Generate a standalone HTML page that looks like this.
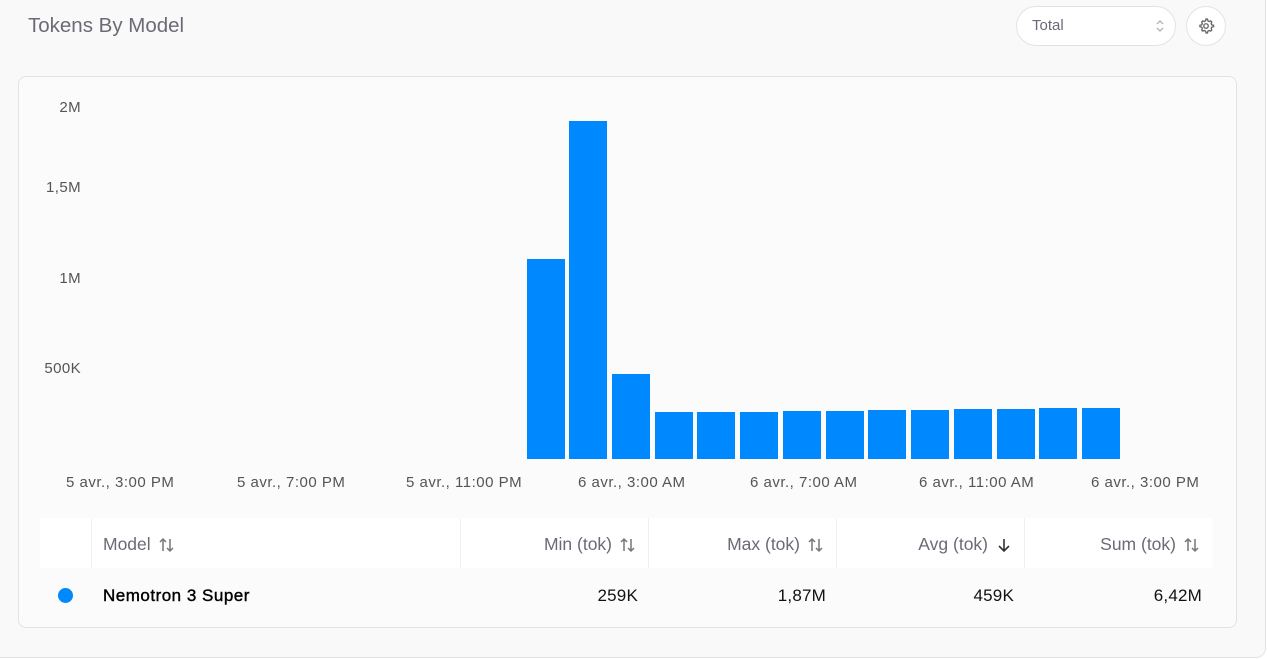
<!DOCTYPE html>
<html><head><meta charset="utf-8"><style>
*{box-sizing:border-box;margin:0;padding:0}
body{width:1267px;height:659px;background:#fff;font-family:"Liberation Sans",sans-serif;position:relative;overflow:hidden}
.outer{position:absolute;left:-10px;top:-10px;width:1276px;height:668px;background:#f9f9f9;border:1px solid #e3e3e3;border-radius:10px}
.t{position:absolute;font-size:15px;color:#555;white-space:nowrap}
.y{font-size:15px;letter-spacing:0.4px}
.x{font-size:15px;letter-spacing:0.5px;top:474px}
.h{font-size:17.5px;color:#6b6b78;top:534px;display:flex;align-items:center;gap:7px}
.v{font-size:17px;color:#111;top:586px;letter-spacing:0.2px}
.bar{position:absolute;background:#0088ff;bottom:200px;width:38px}
</style></head><body>
<div class="outer"></div>
<div class="t" style="left:28px;top:14px;font-size:20.5px;color:#6b6b78">Tokens By Model</div>
<div style="position:absolute;left:1016px;top:6px;width:160px;height:40px;border:1px solid #e3e3e3;border-radius:20px;background:#fff"></div>
<div class="t" style="left:1032px;top:17px;font-size:15px;color:#6b6b78">Total</div>
<svg style="position:absolute;left:1154px;top:17px" width="12" height="18" viewBox="0 0 12 18"><path d="M3 7l3-3 3 3M3 11l3 3 3-3" fill="none" stroke="#aaa" stroke-width="1.2"/></svg>
<div style="position:absolute;left:1186px;top:6px;width:40px;height:40px;border:1px solid #e3e3e3;border-radius:50%;background:#fff"></div>
<svg style="position:absolute;left:1197px;top:17px" width="18" height="18" viewBox="0 0 24 24" fill="none" stroke="#666" stroke-width="1.8"><circle cx="12" cy="12" r="3"/><path d="M12 2.5l2 .3.5 2.3 1.6.9 2.2-.8 1.4 1.5-.8 2.2.9 1.6 2.3.5v2l-2.3.5-.9 1.6.8 2.2-1.4 1.5-2.2-.8-1.6.9-.5 2.3h-2l-.5-2.3-1.6-.9-2.2.8-1.4-1.5.8-2.200-.9-1.6-2.3-.5v-2l2.3-.5.9-1.6-.8-2.2 1.4-1.5 2.2.8 1.6-.9.5-2.3z"/></svg>
<div style="position:absolute;left:18px;top:76px;width:1219px;height:552px;background:#fbfbfb;border:1px solid #e3e3e3;border-radius:8px"></div>
<div class="t y" style="right:1186px;top:99px">2M</div>
<div class="t y" style="right:1186px;top:179px">1,5M</div>
<div class="t y" style="right:1186px;top:270px">1M</div>
<div class="t y" style="right:1186px;top:360px">500K</div>
<div class="bar" style="left:527px;top:259px"></div>
<div class="bar" style="left:569px;top:121px"></div>
<div class="bar" style="left:612px;top:374px"></div>
<div class="bar" style="left:655px;top:412px"></div>
<div class="bar" style="left:697px;top:412px"></div>
<div class="bar" style="left:740px;top:412px"></div>
<div class="bar" style="left:783px;top:411px"></div>
<div class="bar" style="left:826px;top:411px"></div>
<div class="bar" style="left:868px;top:410px"></div>
<div class="bar" style="left:911px;top:410px"></div>
<div class="bar" style="left:954px;top:409px"></div>
<div class="bar" style="left:997px;top:409px"></div>
<div class="bar" style="left:1039px;top:408px"></div>
<div class="bar" style="left:1082px;top:408px"></div>
<div class="t x" style="left:66px">5 avr., 3:00 PM</div>
<div class="t x" style="left:237px">5 avr., 7:00 PM</div>
<div class="t x" style="left:406px">5 avr., 11:00 PM</div>
<div class="t x" style="left:578px">6 avr., 3:00 AM</div>
<div class="t x" style="left:750px">6 avr., 7:00 AM</div>
<div class="t x" style="left:919px">6 avr., 11:00 AM</div>
<div class="t x" style="left:1091px">6 avr., 3:00 PM</div>
<div style="position:absolute;left:40px;top:518px;width:1173px;height:50px;background:#fff"></div>
<div style="position:absolute;left:91px;top:518px;width:1px;height:50px;background:#f0f0f0"></div>
<div style="position:absolute;left:460px;top:518px;width:1px;height:50px;background:#f0f0f0"></div>
<div style="position:absolute;left:648px;top:518px;width:1px;height:50px;background:#f0f0f0"></div>
<div style="position:absolute;left:836px;top:518px;width:1px;height:50px;background:#f0f0f0"></div>
<div style="position:absolute;left:1024px;top:518px;width:1px;height:50px;background:#f0f0f0"></div>
<svg width="0" height="0" style="position:absolute"><defs><symbol id="s" viewBox="0 0 18 18"><path d="M5 15V3M2 6l3-3 3 3M12 3v12M9 12l3 3 3-3" fill="none" stroke="#777" stroke-width="1.5"/></symbol></defs></svg>
<div class="t h" style="left:103px">Model <svg width="18" height="18"><use href="#s"/></svg></div>
<div class="t h" style="right:630px">Min (tok) <svg width="18" height="18"><use href="#s"/></svg></div>
<div class="t h" style="right:442px">Max (tok) <svg width="18" height="18"><use href="#s"/></svg></div>
<div class="t h" style="right:254px">Avg (tok) <svg width="18" height="18" viewBox="0 0 18 18"><path d="M9 3v12M4 10l5 5 5-5" fill="none" stroke="#333" stroke-width="1.6"/></svg></div>
<div class="t h" style="right:66px">Sum (tok) <svg width="18" height="18"><use href="#s"/></svg></div>
<div style="position:absolute;left:58px;top:588px;width:15px;height:15px;border-radius:50%;background:#0088ff"></div>
<div class="t v" style="left:103px;font-size:17px;letter-spacing:0.5px;color:#000;-webkit-text-stroke:0.4px #000">Nemotron 3 Super</div>
<div class="t v" style="right:629px">259K</div>
<div class="t v" style="right:441px">1,87M</div>
<div class="t v" style="right:253px">459K</div>
<div class="t v" style="right:65px">6,42M</div>
</body></html>
